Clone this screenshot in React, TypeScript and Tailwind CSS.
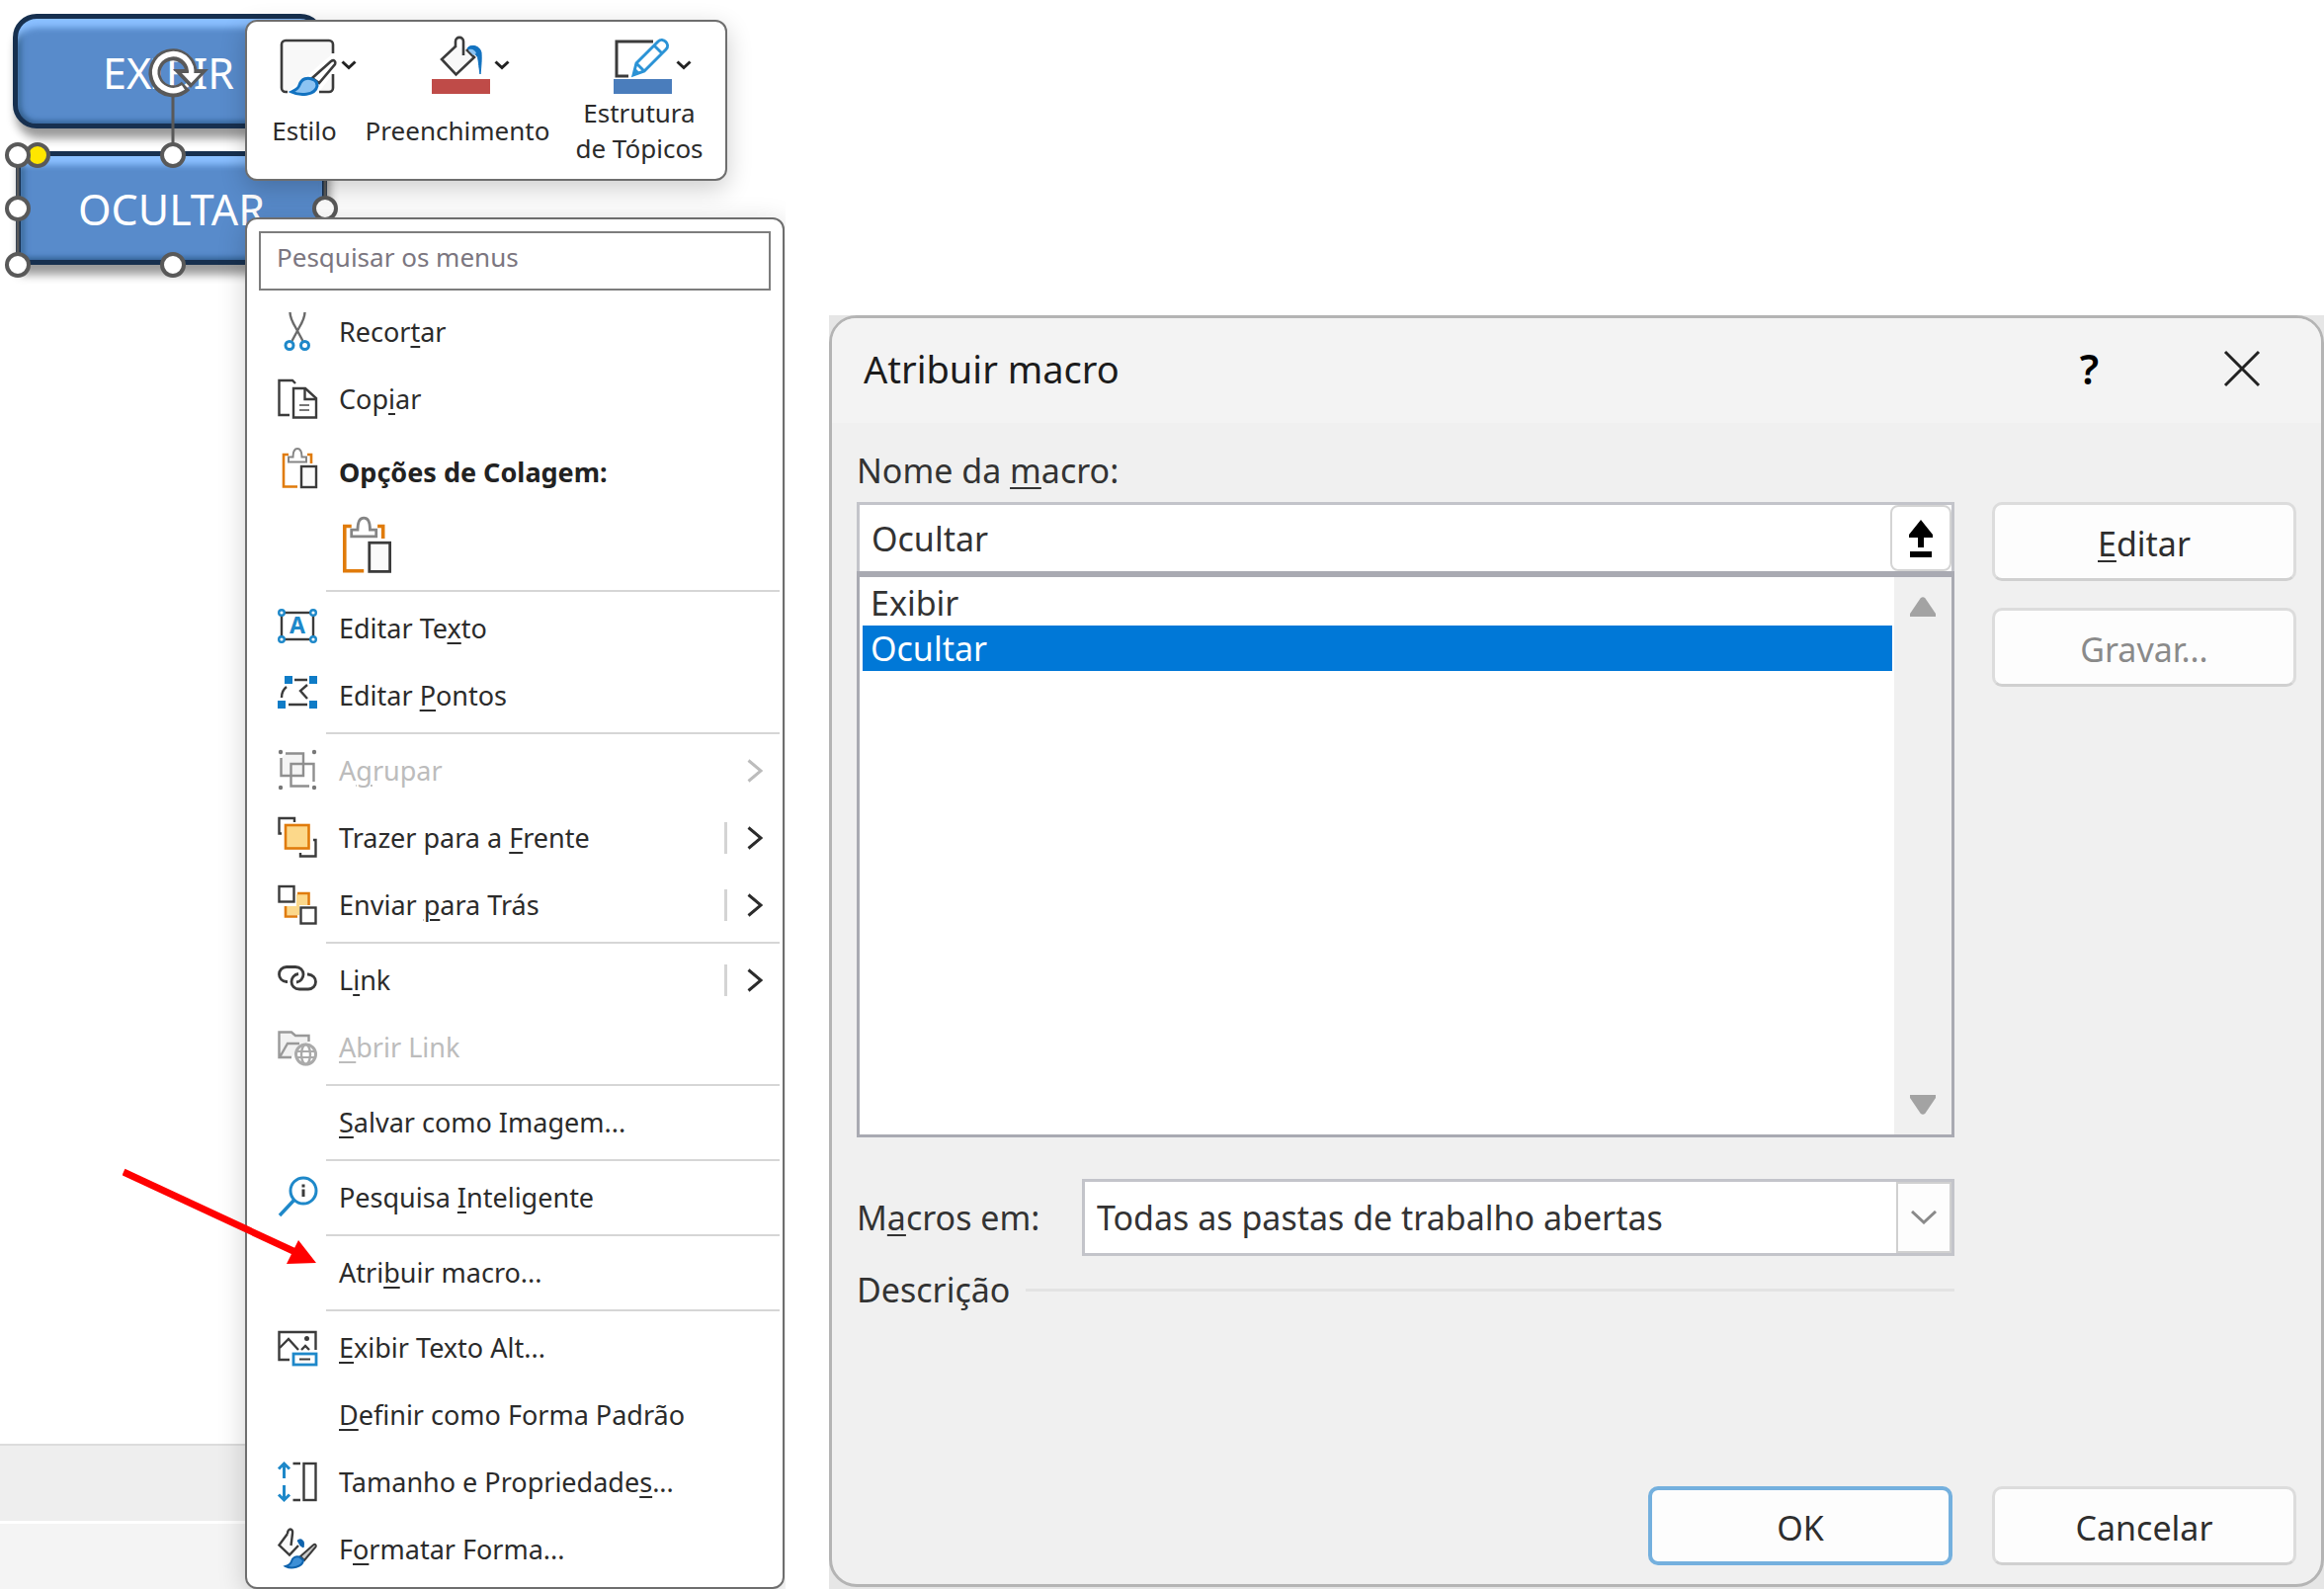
import { useState } from 'react'
import type { ReactNode } from 'react'

const INK = '#3b3b3b'
const BLUE = '#1e88c9'
const ORANGE = '#e07b0b'

function Icon({ children }: { children: ReactNode }) {
  return (
    <svg viewBox="0 0 40 40" className="h-10 w-10 shrink-0 overflow-visible" fill="none" stroke={INK} strokeWidth="2.4" aria-hidden="true">
      {children}
    </svg>
  )
}

const CutIcon = () => (
  <Icon>
    <path d="M12.5 0c0 6 3 11 6 16l7 13M27.500 0c0 6-3 11-6 16l-7 13" stroke="#6a6a6a" />
    <circle cx="12" cy="33.500" r="4" stroke={BLUE} strokeWidth="3" />
    <circle cx="27.500" cy="33.500" r="4" stroke={BLUE} strokeWidth="3" />
  </Icon>
)

const CopyIcon = () => (
  <Icon>
    <path d="M18 4l-3-3H1.500v35H12" />
    <path d="M16 9h12l11 10v19.500H16z" />
    <path d="M27.500 9v11H39" />
    <path d="M22 26h10M22 31h10" stroke="#777" strokeWidth="2" />
  </Icon>
)

function PasteGlyph() {
  return (
    <>
      <path d="M11 6H6v32.500h14M30 6h4v9" stroke={ORANGE} strokeWidth="2.600" />
      <path d="M11 13.500V8.500h4.500C15.500 3 17 0 20 0s4.500 3 4.500 8.500H29v5z" stroke="#858585" fill="#fff" strokeWidth="2" />
      <rect x="24" y="18" width="15" height="21" fill="#fafafa" />
    </>
  )
}

const PasteIcon = () => <Icon><PasteGlyph /></Icon>

const EditTextIcon = () => (
  <Icon>
    <rect x="4" y="4" width="32" height="27" />
    {[[4, 4], [36, 4], [4, 31], [36, 31]].map(([x, y]) => (
      <circle key={`${x}-${y}`} cx={x} cy={y} r="2.800" fill="#fff" stroke={BLUE} />
    ))}
    <text x="20" y="25" textAnchor="middle" fontSize="23" fontWeight="700" fill={BLUE} stroke="none">A</text>
  </Icon>
)

const EditPointsIcon = () => (
  <Icon>
    <path d="M17 4h13M11 29h19M9 11c-4 3-5 7-5 11M30 9l-7 6 7 8" />
    {[[7, 0], [32, 0], [0, 25], [32, 25]].map(([x, y]) => (
      <rect key={`${x}-${y}`} x={x} y={y} width="8" height="8" fill="#0f7cc7" stroke="none" />
    ))}
  </Icon>
)

const GroupIcon = () => (
  <Icon>
    <g stroke="#8f8f8f">
      <path d="M8 2.500h18V25H3.500V7" fill="#f4f4f4" />
      <path d="M36.500 31V13H13.500v22.500H32" />
    </g>
    {[[3, 1], [37, 1], [3, 37], [37, 37]].map(([x, y]) => (
      <circle key={`${x}-${y}`} cx={x} cy={y} r="2.200" fill="#777" stroke="none" />
    ))}
  </Icon>
)

const FrontIcon = () => (
  <Icon>
    <path d="M4 15.500H1.500V0H17v4M36 22h2.500v16.500H23V35" />
    <rect x="8" y="7" width="23.500" height="23.500" fill="#fcd88a" stroke={ORANGE} strokeWidth="2.600" />
  </Icon>
)

const BackIcon = () => (
  <Icon>
    <path d="M19 9h11v11h-8v10H9v-9h10z" fill="#fcd88a" stroke="none" />
    <path d="M20 8h11.500v12M8 21v10.500h12" stroke={ORANGE} strokeWidth="2.600" />
    <rect x="1.500" y="1" width="15" height="15.500" fill="#fff" />
    <rect x="23.500" y="22.500" width="15" height="16" fill="#fff" />
  </Icon>
)

const LinkIcon = () => (
  <Icon>
    <g strokeWidth="2.800">
      <path d="M10 21.500H9C4.500 21 1.500 18 1.500 14S4.500 6.500 9 6.500h9c5 0 8 3.500 8 7.500s-3 7.500-7 8" />
      <path d="M30 14h1c4.500.5 7.500 3.500 7.500 7.500s-3 7.500-7.500 7.500h-9c-5 0-8-3.500-8-7.500s3-7.500 7-8" />
    </g>
  </Icon>
)

const OpenLinkIcon = () => (
  <Icon>
    <g stroke="#999">
      <path d="M14 30H1.500V4.500H14l4 3.500h13.500v6M2 30l8-14h12" fill="#f2f2f2" />
      <circle cx="28.500" cy="27" r="10" fill="#fff" stroke="#aaa" strokeWidth="3" />
      <path d="M19 24h19M19 30h19" stroke="#aaa" strokeWidth="2" />
      <ellipse cx="28.500" cy="27" rx="4.500" ry="10" stroke="#aaa" />
    </g>
  </Icon>
)

const SmartLookupIcon = () => (
  <Icon>
    <circle cx="26" cy="13" r="13" stroke={BLUE} strokeWidth="3" />
    <path d="M17 22L2 38" stroke={BLUE} strokeWidth="3.400" />
    <path d="M26 11.500V19M26 6.500v3" strokeWidth="3" />
  </Icon>
)

const AltTextIcon = () => (
  <Icon>
    <path d="M12 32H1.500V4h37v18" />
    <path d="M2 20l9-9 10 11M24 22l4-4 4 4" />
    <circle cx="29.500" cy="10.500" r="2.500" fill={INK} stroke="none" />
    <rect x="16" y="26" width="23" height="11" stroke={BLUE} fill="#fff" strokeWidth="2.800" />
    <path d="M22 31.500h11" strokeWidth="2" />
  </Icon>
)

const SizeIcon = () => (
  <Icon>
    <path d="M6.500 1v15M1 6.500L6.500 1l5.500 5.500M6.500 23v15M1 32.500L6.500 38l5.500-5.500" stroke={BLUE} strokeWidth="3" />
    <path d="M15.500 1H23M15.500 38H23" />
    <rect x="26.500" y="1" width="12" height="37" />
  </Icon>
)

const FormatIcon = () => (
  <Icon>
    <path d="M10 4L1.500 15.500 12 25.500l9-9.500M10 4c0-6 6-6 5 0l-1.500 12" fill="#fafafa" />
    <path d="M20 11c4-3 8 0 6 7l-3-2z" fill="#0f63ad" stroke="#0f63ad" strokeWidth="1" />
    <path d="M36 15.500c2-1.500 3.500 0 2.500 2L27 31l-4-4z" fill="#c9c9c9" strokeWidth="2" />
    <path d="M22 27.500c-4-1-7 1-8 4.500-.7 3-3 4-6 5 6 3 17 1 18-6z" fill="#3d8fd6" stroke="#0f63ad" strokeWidth="2" />
  </Icon>
)

// "&" marks the accelerator letter that follows it
function Label({ text }: { text: string }) {
  const at = text.indexOf('&')
  if (at < 0) return <>{text}</>
  return (
    <>
      {text.slice(0, at)}
      <span className="underline decoration-2 underline-offset-4">{text[at + 1]}</span>
      {text.slice(at + 2)}
    </>
  )
}

type Entry = {
  text: string
  icon?: () => ReactNode
  disabled?: boolean
  submenu?: boolean
  split?: boolean
}

const GROUPS: Entry[][] = [
  [
    { text: 'Editar Te&xto', icon: EditTextIcon },
    { text: 'Editar &Pontos', icon: EditPointsIcon },
  ],
  [
    { text: 'A&grupar', icon: GroupIcon, disabled: true, submenu: true },
    { text: 'Trazer para a &Frente', icon: FrontIcon, submenu: true, split: true },
    { text: 'Enviar &para Trás', icon: BackIcon, submenu: true, split: true },
  ],
  [
    { text: 'L&ink', icon: LinkIcon, submenu: true, split: true },
    { text: '&Abrir Link', icon: OpenLinkIcon, disabled: true },
  ],
  [{ text: '&Salvar como Imagem...' }],
  [{ text: 'Pesquisa &Inteligente', icon: SmartLookupIcon }],
  [{ text: 'Atri&buir macro...' }],
  [
    { text: '&Exibir Texto Alt...', icon: AltTextIcon },
    { text: '&Definir como Forma Padrão' },
    { text: 'Tamanho e Propriedade&s...', icon: SizeIcon },
    { text: 'F&ormatar Forma...', icon: FormatIcon },
  ],
]

function MenuItem({ text, icon: ItemIcon, disabled, submenu, split }: Entry) {
  return (
    <button
      type="button"
      role="menuitem"
      disabled={disabled}
      className="flex h-17 w-full items-center pr-5 pl-[31px] text-left text-[#2b2b2b] disabled:text-[#bcbcbc]"
    >
      <span className="mr-[22px] flex w-10 shrink-0">{ItemIcon && <ItemIcon />}</span>
      <span className="flex-1 whitespace-nowrap"><Label text={text} /></span>
      {split && <span className="mr-5 h-8 w-[3px] bg-[#d4d4d4]" />}
      {submenu && (
        <svg viewBox="0 0 16 24" className="h-6 w-4" fill="none" stroke="currentColor" strokeWidth="3" aria-hidden="true">
          <path d="M1.500 1.500L14 12 1.500 22.500" />
        </svg>
      )}
    </button>
  )
}

function ContextMenu() {
  return (
    <div role="menu" className="absolute top-[220px] left-[248px] w-[546px] rounded-xl border-2 border-[#6e6e6e] bg-white pt-3 pb-1 text-[27px] leading-9 shadow-[0_6px_28px_rgba(0,0,0,0.18)]">
      <div className="mx-3 mb-2 flex h-15">
        <input
          aria-label="Pesquisar os menus"
          placeholder="Pesquisar os menus"
          className="w-full border-2 border-[#7d7d7d] bg-white px-4 pb-2 text-[26px] outline-none placeholder:text-[#7b7680]"
        />
      </div>
      <MenuItem text="Recor&tar" icon={CutIcon} />
      <MenuItem text="Cop&iar" icon={CopyIcon} />
      <div className="flex h-18 items-center pl-[31px] font-bold text-[#222]">
        <span className="mr-[22px] flex w-10"><PasteIcon /></span>
        <span className="pt-2">Opções de Colagem:</span>
      </div>
      <div className="flex h-21 items-center pl-24">
        <button type="button" aria-label="Colar">
          <svg viewBox="4 0 36 40" className="h-14 w-[50px] overflow-visible" fill="none" stroke={INK} strokeWidth="2" aria-hidden="true">
            <PasteGlyph />
          </svg>
        </button>
      </div>
      {GROUPS.map((group, i) => (
        <div key={i}>
          <div role="separator" className="my-[3px] mr-[3px] ml-20 h-[2px] bg-[#d6d6d6]" />
          {group.map(entry => <MenuItem key={entry.text} {...entry} />)}
        </div>
      ))}
    </div>
  )
}

function ToolButton({ label, children }: { label: string; children: ReactNode }) {
  return (
    <button type="button" className="flex flex-col items-center">
      <span className="flex items-center gap-1 pl-[26px]">
        <svg viewBox="0 0 60 60" className="h-15 w-15 overflow-visible" fill="none" stroke={INK} strokeWidth="2.600" aria-hidden="true">
          {children}
        </svg>
        <svg viewBox="0 0 16 10" className="h-[10px] w-4" fill="none" stroke="#222" strokeWidth="3" aria-hidden="true">
          <path d="M1.500 1.500L8 7.500l6.500-6" />
        </svg>
      </span>
      <span className="flex h-18 items-center text-center whitespace-pre-line">{label}</span>
    </button>
  )
}

function MiniToolbar() {
  return (
    <div role="toolbar" className="absolute top-5 left-[248px] grid w-[488px] grid-cols-[116px_194px_1fr] rounded-xl border-2 border-[#6e6e6e] bg-white pt-[14px] pb-[13px] text-[26px] leading-9 text-[#2b2b2b] shadow-[0_8px_26px_rgba(0,0,0,0.2)]">
      <ToolButton label="Estilo">
        <path d="M56 18V9a4 4 0 0 0-4-4H8a4 4 0 0 0-4 4v44a4 4 0 0 0 4 4h2M42 57h10a4 4 0 0 0 4-4V39" fill="#f8f8f8" />
        <path d="M54 26c3-2 5 0 4 3L42 48l-7-5z" fill="#fff" />
        <path d="M37 45c-7-4-13-1-15 5-1 4-4 5-8 7 8 4 24 4 26-6 0-3-1-5-3-6z" fill="#8cc3f2" stroke="#1272c0" strokeWidth="3" />
      </ToolButton>
      <ToolButton label="Preenchimento">
        <path d="M25 11L11 24l14.500 15.500L44 22l-8-8" fill="#f8f8f8" />
        <path d="M25 12V6c0-5.500 8-5.500 8 0v14" />
        <path d="M37 13c2-4 12-4 14 4 .5 6 0 14-1 22-1.500-8-1.500-15-3-18-2-2-6-5-10-8z" fill="#1272c0" stroke="#1272c0" strokeWidth="1" />
        <path d="M39 14c3-1 6 1 7 4l-3 2-5-5z" fill="#8cc3f2" stroke="none" />
        <path d="M1 44h59v15H1z" fill="#bf4b48" stroke="none" />
      </ToolButton>
      <ToolButton label={'Estrutura\nde Tópicos'}>
        <path d="M41 6H4v35h12" strokeWidth="3" />
        <path d="M21 40l3-12L46 6c5-5 13 3 8 8L32 36zM24 28l8 8M42 10l8 8" fill="#fff" stroke="#2b93d6" strokeWidth="3" />
        <path d="M21 41l2-8 5 5z" fill="#2b93d6" stroke="none" />
        <path d="M1 44h59v15H1z" fill="#4a7dbc" stroke="none" />
      </ToolButton>
    </div>
  )
}

const HANDLES = [[18, 157], [175, 157], [18, 211], [329, 211], [18, 268], [175, 268]]

function SheetShapes() {
  const shape = 'absolute flex items-center justify-center border-[5px] border-[#17304f] bg-[#588bcb] pt-1 text-[43px] text-white shadow-[inset_0_12px_6px_-3px_#8abfff,inset_6px_0_6px_-3px_#35628f,inset_0_-5px_5px_-2px_#3a689f,3px_10px_10px_rgba(0,0,0,0.4)]'
  return (
    <>
      <button type="button" className={`${shape} top-[14px] left-[13px] h-[116px] w-[315px] rounded-3xl`}>EXIBIR</button>
      <button type="button" className={`${shape} top-[153px] left-4 h-[115px] w-[315px] rounded-sm`}>OCULTAR</button>
      <svg viewBox="0 0 350 290" className="absolute top-0 left-0 h-[290px] w-[350px]" fill="none" aria-hidden="true">
        <path d="M175 98v48M18 157v111M329 157v111" stroke="#595959" strokeWidth="3" />
        <path d="M188 87A18.500 18.500 0 1 1 193.500 74" stroke="#595959" strokeWidth="12" />
        <path d="M175 70h36l-18 19z" fill="#595959" />
        <path d="M185.500 88.500A18.500 18.500 0 1 1 193.500 76" stroke="#fff" strokeWidth="5.500" />
        <path d="M184 74h19l-9.500 10z" fill="#fff" />
        <circle cx="38" cy="157" r="11" fill="#ffe600" stroke="#595959" strokeWidth="4" />
        {HANDLES.map(([x, y]) => (
          <circle key={`${x}-${y}`} cx={x} cy={y} r="11" fill="#fff" stroke="#595959" strokeWidth="4" />
        ))}
      </svg>
    </>
  )
}

const MACROS = ['Exibir', 'Ocultar']

function PushButton({ text, disabled, primary }: { text: string; disabled?: boolean; primary?: boolean }) {
  return (
    <button
      type="button"
      disabled={disabled}
      className={[
        'flex h-20 w-[308px] items-center justify-center rounded-[10px] bg-[#fdfdfd] pt-1 text-[#2e2e2e] disabled:text-[#8a8a8a]',
        primary ? 'border-4 border-[#74b0de]' : 'border-[3px] border-[#dcdcdc] border-b-[#d0d0d0]',
      ].join(' ')}
    >
      <span><Label text={text} /></span>
    </button>
  )
}

function MacroDialog() {
  const [macro, setMacro] = useState('Ocultar')

  return (
    <div className="mt-[319px] ml-11 flex flex-1 bg-[#e6e6e6] pb-[2px]">
      <div role="dialog" aria-labelledby="dialog-title" className="flex flex-1 flex-col rounded-[28px] border-[3px] border-[#b4b4b4] bg-[#f0f0f0] text-[34px] leading-11 text-[#333]">
        <header className="flex h-[106px] items-center rounded-t-3xl bg-[#f3f3f3] pr-[61px] pb-1 pl-8">
          <h1 id="dialog-title" className="flex-1 text-[38px] text-[#1c1c1c]">Atribuir macro</h1>
          <button type="button" aria-label="Ajuda" className="mr-[126px] text-[42px] font-semibold text-black">?</button>
          <button type="button" aria-label="Fechar">
            <svg viewBox="0 0 38 38" className="h-[38px] w-[38px]" fill="none" stroke="#222" strokeWidth="3" aria-hidden="true">
              <path d="M2 2l34 34M36 2L2 36" />
            </svg>
          </button>
        </header>

        <div className="grid grid-cols-[1fr_308px] gap-x-[38px] pr-[25px] pl-[25px]">
          <label htmlFor="macro-name" className="col-span-2 mt-[26px] mb-[10px]"><Label text="Nome da &macro:" /></label>

          <div>
            <div className="flex h-[70px] border-[3px] border-b-0 border-[#c3c4ca] bg-white">
              <input
                id="macro-name"
                value={macro}
                onChange={e => setMacro(e.target.value)}
                className="min-w-0 flex-1 pl-3 outline-none"
              />
              <button type="button" aria-label="Recolher" className="flex w-[62px] items-center justify-center rounded-lg border-2 border-[#d4d4d4]">
                <svg viewBox="0 0 24 38" className="h-[38px] w-6" fill="#000" aria-hidden="true">
                  <path d="M12 0l12 15v3h-9v10H9V18H0v-3zM1 32h22v6H1z" />
                </svg>
              </button>
            </div>
            <div className="flex h-[573px] border-3 border-t-[6px] border-[#a9aab2]">
              <ul role="listbox" aria-label="Macros" className="flex-1 bg-white py-[3px] pr-[2px] pl-[3px]">
                {MACROS.map(name => (
                  <li
                    key={name}
                    role="option"
                    aria-selected={name === macro}
                    onClick={() => setMacro(name)}
                    className="flex h-[46px] items-center pl-2 aria-selected:bg-[#0078d7] aria-selected:text-white"
                  >
                    {name}
                  </li>
                ))}
              </ul>
              <div className="flex w-[58px] flex-col items-center justify-between bg-[#f0f0f0] pt-5 pb-5">
                <svg viewBox="0 0 26 20" className="h-5 w-[26px]" fill="#a3a3a3" aria-hidden="true"><path d="M10.500 1.500q2.500-2.500 5 0L26 17v3H0v-3z" /></svg>
                <svg viewBox="0 0 26 20" className="h-5 w-[26px]" fill="#a3a3a3" aria-hidden="true"><path d="M10.500 18.500q2.500 2.500 5 0L26 3V0H0v3z" /></svg>
              </div>
            </div>
          </div>

          <div className="flex flex-col gap-[27px]">
            <PushButton text="&Editar" />
            <PushButton text="Gravar..." disabled />
          </div>

          <div className="mt-[42px] flex items-center">
            <label htmlFor="macro-scope" className="w-[228px]"><Label text="M&acros em:" /></label>
            <div className="relative flex-1">
              <select id="macro-scope" className="h-[78px] w-full appearance-none border-[3px] border-[#c3c4ca] bg-white pr-16 pl-3 outline-none">
                <option>Todas as pastas de trabalho abertas</option>
              </select>
              <span className="pointer-events-none absolute inset-y-[3px] right-[3px] flex w-14 items-center justify-center border-2 border-[#d0d0d0] bg-[#fdfdfd]">
                <svg viewBox="0 0 26 14" className="h-[14px] w-[26px]" fill="none" stroke="#8a8a8a" strokeWidth="3" aria-hidden="true">
                  <path d="M1 1l12 11L25 1" />
                </svg>
              </span>
            </div>
          </div>

          <div className="col-start-1 mt-3 flex items-center gap-4">
            <span>Descrição</span>
            <span className="h-[3px] flex-1 bg-[#e3e3e3]" />
          </div>
        </div>

        <footer className="mt-auto flex justify-end gap-10 pr-[25px] pb-[19px]">
          <PushButton text="OK" primary />
          <PushButton text="Cancelar" />
        </footer>
      </div>
    </div>
  )
}

export default function App() {
  return (
    <main className="flex min-h-screen bg-white font-['Noto_Sans','Open_Sans',sans-serif]">
      <section className="relative flex w-[795px] shrink-0 flex-col justify-end overflow-hidden">
        <div className="w-[280px] border-t-2 border-[#dcdcdc]">
          <div className="h-19 bg-[#eeeeee]" />
          <div className="mt-[3px] h-[66px] bg-[#f4f4f4]" />
        </div>
        <SheetShapes />
        <MiniToolbar />
        <ContextMenu />
        <svg viewBox="0 0 200 100" className="absolute top-[1182px] left-[124px] h-[100px] w-[200px]" aria-hidden="true">
          <path d="M1 4l174 81" stroke="#f00" strokeWidth="7" />
          <path d="M178 73l-12 24 30-1z" fill="#f00" />
        </svg>
      </section>
      <MacroDialog />
    </main>
  )
}
